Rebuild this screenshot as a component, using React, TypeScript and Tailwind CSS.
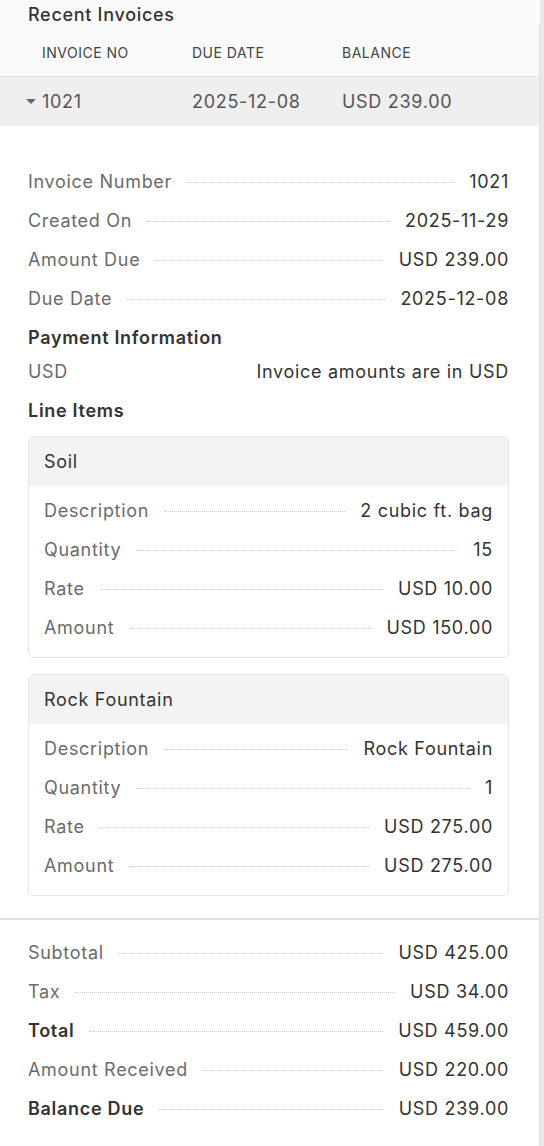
import React from "react";

type RowProps = { label: string; value: string; bold?: boolean };

function Row({ label, value, bold }: RowProps) {
  return (
    <div className="flex h-[39px] items-center text-[18px]">
      <span className={bold ? "font-semibold text-[#333333]" : "text-[#6b6b6b]"}>{label}</span>
      <div className="mx-[15px] h-0 flex-1 translate-y-[1px] border-t border-dotted border-[#cdcdcd]" />
      <span className="text-[#333333]">{value}</span>
    </div>
  );
}

function Card({ title, rows }: { title: string; rows: [string, string][] }) {
  return (
    <div className="overflow-hidden rounded-[6px] border border-[#e6e6e6]">
      <div className="flex h-[49px] items-center bg-[#f3f3f3] px-[15px] text-[18px] text-[#333333]">{title}</div>
      <div className="px-[15px] pb-[10px] pt-[5px]">
        {rows.map(([l, v]) => (
          <Row key={l} label={l} value={v} />
        ))}
      </div>
    </div>
  );
}

export default function App() {
  return (
    <div className="flex min-h-[1146px] w-[544px] bg-white font-['Inter',sans-serif] tracking-[0.7px] antialiased">
      <div className="w-[539px]">
        <div className="bg-[#fafafa]">
          <div className="flex h-[29px] items-center pl-[28px] text-[18px] font-medium text-[#333333]">
            Recent Invoices
          </div>
          <div className="grid h-[47px] grid-cols-[150px_150px_150px] items-center pl-[42px] text-[14px] tracking-[0.5px] text-[#444444]">
            <span>INVOICE NO</span>
            <span>DUE DATE</span>
            <span>BALANCE</span>
          </div>
        </div>
        <div className="h-px bg-[#e3e3e3]" />
        <div className="grid h-[49px] grid-cols-[150px_150px_150px] items-center bg-[#efefef] pl-[42px] text-[18px] text-[#555555]">
          <span className="-ml-[16px] flex items-center">
            <svg width="16" height="10" viewBox="0 0 16 10" className="shrink-0">
              <path d="M0 2 L10 2 L5 7 Z" fill="#666666" />
            </svg>
            1021
          </span>
          <span>2025-12-08</span>
          <span>USD 239.00</span>
        </div>

        <div className="pl-[28px] pr-[30px] pt-[36px]">
          <Row label="Invoice Number" value="1021" />
          <Row label="Created On" value="2025-11-29" />
          <Row label="Amount Due" value="USD 239.00" />
          <Row label="Due Date" value="2025-12-08" />
          <div className="flex h-[38px] items-center text-[18px] font-semibold text-[#333333]">
            Payment Information
          </div>
          <div className="flex h-[30px] items-center justify-between text-[18px]">
            <span className="text-[#6b6b6b]">USD</span>
            <span className="text-[#333333]">Invoice amounts are in USD</span>
          </div>
          <div className="mt-[4px] flex h-[40px] items-center text-[18px] font-semibold text-[#333333]">
            Line Items
          </div>
          <div className="mt-[6px] flex flex-col gap-[16px]">
            <Card
              title="Soil"
              rows={[
                ["Description", "2 cubic ft. bag"],
                ["Quantity", "15"],
                ["Rate", "USD 10.00"],
                ["Amount", "USD 150.00"],
              ]}
            />
            <Card
              title="Rock Fountain"
              rows={[
                ["Description", "Rock Fountain"],
                ["Quantity", "1"],
                ["Rate", "USD 275.00"],
                ["Amount", "USD 275.00"],
              ]}
            />
          </div>
          <div className="h-[22px]" />
        </div>
        <div className="h-[2px] bg-[#e0e0e0]" />
        <div className="pl-[28px] pr-[30px] pt-[13px]">
          <Row label="Subtotal" value="USD 425.00" />
          <Row label="Tax" value="USD 34.00" />
          <Row label="Total" value="USD 459.00" bold />
          <Row label="Amount Received" value="USD 220.00" />
          <Row label="Balance Due" value="USD 239.00" bold />
        </div>
      </div>
      <div className="mt-[24px] w-px bg-[#dedede]" />
      <div className="w-[4px] bg-[#e8e8e8]" />
    </div>
  );
}
